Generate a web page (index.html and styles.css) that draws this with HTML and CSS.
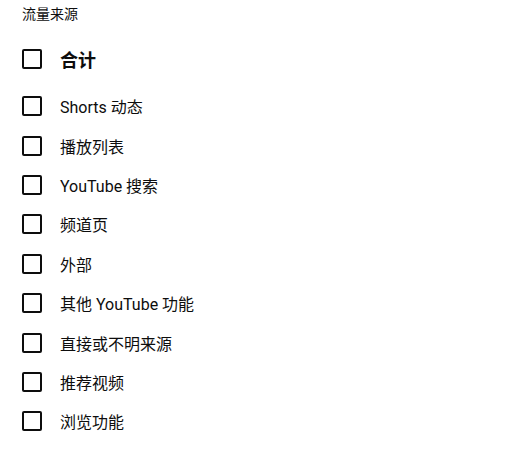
FILE: index.html
```html
<!DOCTYPE html>
<html lang="zh">
<head>
<meta charset="utf-8">
<link rel="stylesheet" href="styles.css">
</head>
<body>
<div class="panel">
  <div class="title">流量来源</div>
  <label class="row total"><span class="box"></span><span class="label">合计</span></label>
  <ul class="list">
    <li class="row"><span class="box"></span><span class="label">Shorts 动态</span></li>
    <li class="row"><span class="box"></span><span class="label">播放列表</span></li>
    <li class="row"><span class="box"></span><span class="label">YouTube 搜索</span></li>
    <li class="row"><span class="box"></span><span class="label">频道页</span></li>
    <li class="row"><span class="box"></span><span class="label">外部</span></li>
    <li class="row"><span class="box"></span><span class="label">其他 YouTube 功能</span></li>
    <li class="row"><span class="box"></span><span class="label">直接或不明来源</span></li>
    <li class="row"><span class="box"></span><span class="label">推荐视频</span></li>
    <li class="row"><span class="box"></span><span class="label">浏览功能</span></li>
  </ul>
</div>
</body>
</html>
```

FILE: styles.css
```css
* { box-sizing: border-box; }
html, body { margin: 0; padding: 0; background: #fff; }
body {
  font-family: Roboto, "Noto Sans CJK SC", sans-serif;
  color: #0d0d0d;
}
.panel {
  padding: 5px 0 0 22px;
}
.title {
  font-size: 14px;
  line-height: 18px;
  height: 18px;
}
.row {
  display: flex;
  align-items: center;
  height: 39.4px;
  font-size: 16px;
}
.total {
  height: 37px;
  margin-top: 17px;
  margin-bottom: 9.5px;
  font-size: 18px;
  font-weight: 700;
}
.list {
  list-style: none;
  margin: 0;
  padding: 0;
}
.box {
  width: 20px;
  height: 20px;
  border: 2px solid #0d0d0d;
  border-radius: 2px;
  flex: none;
}
.label {
  margin-left: 18px;
}
```
